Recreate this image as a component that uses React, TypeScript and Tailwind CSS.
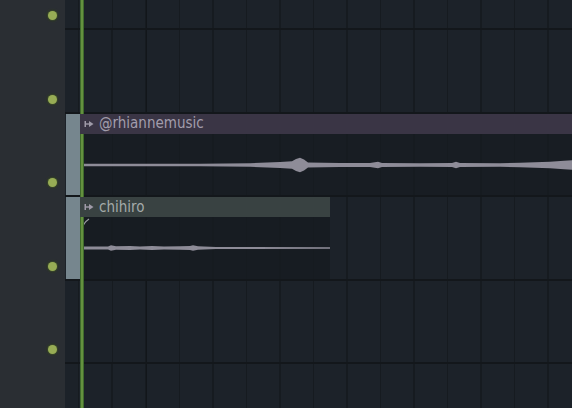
const rowCls = "relative h-[83.5px] shrink-0 border-b-2 border-[#13171b]";
const gridBg =
  "bg-[repeating-linear-gradient(90deg,transparent_0_13px,#161b20_13px_14.5px,transparent_14.5px_33.5px),repeating-linear-gradient(90deg,transparent_0_80px,#12161a_80px_82px,transparent_82px_134px)]";

function Dot() {
  return (
    <div className="absolute bottom-[7px] left-[46px] flex h-[13px] w-[13px] items-center justify-center rounded-full bg-[#24292c]">
      <div className="h-[9px] w-[9px] rounded-full bg-[#97ac55] shadow-[0_0_3px_#5f7a2c]" />
    </div>
  );
}

function ClipIcon() {
  return (
    <svg width="10" height="8" viewBox="0 0 10 8" className="shrink-0">
      <rect x="0.5" y="1" width="1.5" height="6" fill="#9f9aa8" />
      <rect x="2" y="3.3" width="4" height="1.4" fill="#9f9aa8" />
      <path d="M5 1 L9.5 4 L5 7 Z" fill="#9f9aa8" />
    </svg>
  );
}

function Handle() {
  return <div className="h-full w-[14px] shrink-0 bg-[#76868e]" />;
}

function WaveOne() {
  return (
    <svg width="492" height="20" viewBox="0 0 492 20" className="block">
      <path
        fill="#8e8c98"
        d="M0 8.8 L120 8.8 L170 8.2 L200 7 L212 6.3 L216 4 L220 2.8 L224 4.5 L228 7.6 L260 8 L290 8 L298 6.8 L302 8 L340 8.2 L372 8 L376 6.8 L380 8 L420 8.2 L440 7.8 L470 6.8 L484 5.8 L492 5.2 L492 14.8 L484 14.2 L470 13.2 L440 12.2 L420 11.8 L380 12 L376 13.2 L372 12 L340 11.8 L302 12 L298 13.2 L290 12 L260 12 L228 12.4 L224 15.5 L220 17.2 L216 16 L212 13.7 L200 13 L170 11.8 L120 11.2 L0 11.2 Z"
      />
    </svg>
  );
}

function WaveTwo() {
  return (
    <svg width="250" height="12" viewBox="0 0 250 12" className="block">
      <path
        fill="#8e8c98"
        d="M0 4.6 L28 4.5 L31 3.2 L36 4.3 L50 4.1 L60 4.4 L72 4.1 L84 4.4 L100 4.2 L110 4 L113 3.2 L118 4.2 L136 5 L250 5.2 L250 6.8 L136 7 L118 7.8 L113 8.8 L110 8 L100 7.8 L84 7.6 L72 7.9 L60 7.6 L50 7.9 L36 7.7 L31 8.8 L28 7.5 L0 7.4 Z"
      />
    </svg>
  );
}

export default function App() {
  return (
    <div className="relative flex h-[408px] w-[572px] overflow-hidden bg-[#1c2229] font-['DejaVu_Sans_Condensed','DejaVu_Sans',sans-serif]">
      <div className="-mt-[54.5px] flex w-[65px] shrink-0 flex-col bg-[#2a2e33]">
        {[0, 1, 2, 3, 4, 5].map((i) => (
          <div key={i} className="relative h-[83.5px] shrink-0">
            <Dot />
          </div>
        ))}
      </div>

      <div className="-mt-[53.5px] flex flex-1 flex-col">
        <div className={`${rowCls} ${gridBg}`} />
        <div className={`${rowCls} ${gridBg}`} />

        <div className={`${rowCls} ${gridBg} flex pl-[1px]`}>
          <Handle />
          <div className="flex flex-1 flex-col">
            <div className="relative z-20 flex h-[20px] items-center gap-[5px] bg-[#3a3545] pl-[4px] text-[15px] leading-none text-[#a29dac]">
              <ClipIcon />
              <span>@rhiannemusic</span>
            </div>
            <div className="flex flex-1 items-center bg-[#171b21]/70 pt-[1px]">
              <WaveOne />
            </div>
          </div>
        </div>

        <div className={`${rowCls} ${gridBg} flex pl-[1px]`}>
          <Handle />
          <div className="flex w-[250px] flex-col">
            <div className="relative z-20 flex h-[20px] items-center gap-[5px] bg-[#394242] pl-[4px] text-[15px] leading-none text-[#a4aaa9]">
              <ClipIcon />
              <span>chihiro</span>
            </div>
            <div className="relative flex flex-1 flex-col bg-[#171c20]/80">
              <svg width="12" height="14" viewBox="0 0 12 14" className="absolute left-0 top-[1px]">
                <path d="M1 13 Q3 5 9 1" stroke="#9a9ca2" strokeWidth="1.2" fill="none" />
              </svg>
              <div className="flex flex-1 items-center pt-[1px]">
                <WaveTwo />
              </div>
            </div>
          </div>
        </div>

        <div className={`${rowCls} ${gridBg}`} />
        <div className={`${rowCls} ${gridBg}`} />
      </div>

      <div className="absolute bottom-0 left-[80px] top-0 z-10 w-[4px] bg-[#3f6a2c]">
        <div className="mx-auto h-full w-[2px] bg-[#64913f]" />
      </div>
    </div>
  );
}
